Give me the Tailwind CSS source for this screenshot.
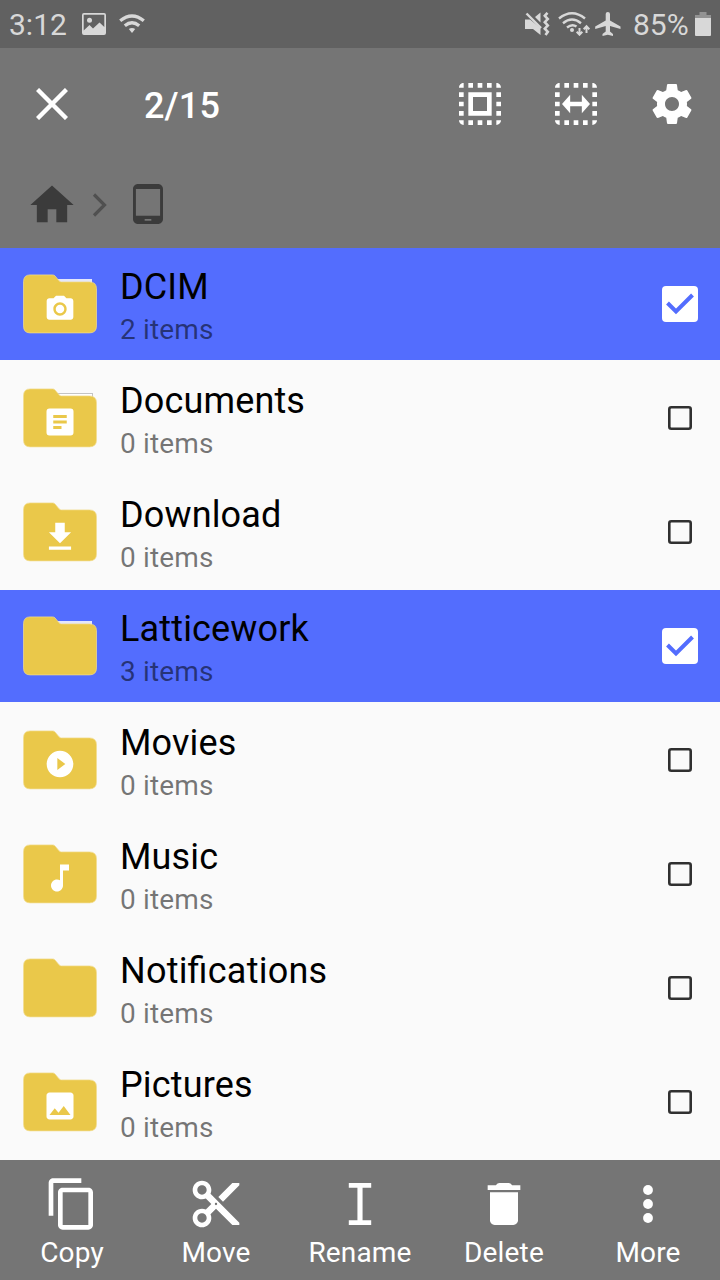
<!DOCTYPE html>
<html lang="en">
<head>
<meta charset="utf-8">
<title>Files</title>
<script src="https://cdn.jsdelivr.net/npm/@tailwindcss/browser@4"></script>
</head>
<body class="w-[720px] h-[1280px] overflow-hidden bg-[#fafafa] font-[Roboto,sans-serif] text-black tracking-[0.15px] [font-feature-settings:'liga'_1]">
<svg class="hidden">
  <symbol id="folder" viewBox="0 -.4 74 60"><path fill="#eac84a" stroke="#f2dd90" stroke-opacity=".7" d="M7 .5H29.5Q31 .5 32 1.500L36 6.300Q37 7.500 38.500 7.500H66.500Q73.500 7.500 73.500 14.500V51.500Q73.500 58.500 66.500 58.500H7Q.5 58.500 .5 51.500V7.500Q.5 .5 7 .5Z"/></symbol>
  <symbol id="checked" viewBox="0 0 36 36"><rect width="36" height="36" rx="4" fill="#fff"/><path d="M5.500 17L14 25.500L30.500 9" fill="none" stroke="#536dfe" stroke-width="4"/></symbol>
  <symbol id="unchecked" viewBox="0 0 24 24"><rect x="1.300" y="1.300" width="21.400" height="21.400" rx="2" fill="none" stroke="#303030" stroke-width="2.600"/></symbol>
  <symbol id="marquee" viewBox="0 0 24 24"><path d="M3 5h2V3c-1.100 0-2 .9-2 2zm0 8h2v-2H3v2zm4 8h2v-2H7v2zM3 9h2V7H3v2zm10-6h-2v2h2V3zm6 0v2h2c0-1.100-.9-2-2-2zM5 21v-2H3c0 1.100.9 2 2 2zm-2-4h2v-2H3v2zM9 3H7v2h2V3zm2 18h2v-2h-2v2zm8-8h2v-2h-2v2zm0 8c1.100 0 2-.9 2-2h-2v2zm0-12h2V7h-2v2zm0 8h2v-2h-2v2zm-4 4h2v-2h-2v2zm0-16h2V3h-2v2z"/></symbol>
</svg>

<div class="h-12 bg-[#616161] flex items-center text-[#d8d8d8] text-[30px] leading-none tracking-normal">
  <span class="w-[82px] pl-[9px] pt-px">3:12</span>
  <svg class="w-6 h-[22px]" viewBox="0 0 24 22" fill="currentColor"><path fill-rule="evenodd" d="M2 0H22Q24 0 24 2V20Q24 22 22 22H2Q0 22 0 20V2Q0 0 2 0ZM1.700 1.700V17.500L7.500 12L11 15.500L17.500 9.500L22.300 14V1.700Z"/><circle cx="7.500" cy="7.200" r="2.500"/></svg>
  <svg class="w-[26px] h-[19px] ml-[13px] -mt-[2px]" viewBox="0 0 26 19"><g fill="none" stroke="currentColor" stroke-width="3.300"><path d="M1.200 6.700Q13-2.800 24.800 6.700"/><path d="M5.800 11.700Q13 5.700 20.200 11.700"/></g><path fill="currentColor" d="M9.800 15Q13 12.800 16.200 15L13 19Z"/></svg>
  <div class="ml-auto flex items-center">
    <svg class="w-[25px] h-6" viewBox="0 0 25 24"><path fill="currentColor" d="M0 7.500H5L15.500 16V23L8 17H0ZM10 5L15.500 .5V10.500Z"/><path stroke="currentColor" stroke-width="2.400" d="M1.500 1.500L16 16"/><path fill="none" stroke="currentColor" stroke-width="2.600" d="M22.500 .8L19.800 3.800L22.800 7L19.800 10.200L22.800 13.500L19.800 16.700L22.800 19.800L20.500 23"/></svg>
    <svg class="w-8 h-6 ml-[8px]" viewBox="0 0 32 24"><g fill="none" stroke="currentColor" stroke-width="2.400"><path d="M1 6.500Q14-4 27 6.500"/><path d="M5 11.200Q14 4 23 11.200"/><path d="M9 15.500Q14 11.500 18.500 14.500"/><path stroke-width="2" d="M21.500 16V22.500M18.700 19.700L21.500 22.700L24.300 19.700M28.500 21V14.500M25.700 17.300L28.500 14.300L31.300 17.300"/></g><circle cx="14" cy="18" r="2" fill="currentColor"/></svg>
    <svg class="w-[26px] h-6 ml-[5px]" viewBox="0 0 26 24" fill="currentColor"><path d="M10.700 2Q10.700 0 12.800 0Q15 0 15 2V8.500L25.500 14.500V17L15 14V19.500L18 22V24L12.800 22.700L7.500 24V22L10.700 19.500V14L.2 17V14.500L10.700 8.500Z"/></svg>
    <span class="ml-[12px] w-[62px] pt-px whitespace-nowrap">85%</span>
    <svg class="w-4 h-6 mr-[9px]" viewBox="0 0 16 24"><path fill="#939393" d="M4.500 0H11.500V3H16V6H0V3H4.500Z"/><path fill="currentColor" d="M0 6H16V23Q16 24 15 24H1Q0 24 0 23Z"/></svg>
  </div>
</div>

<header class="h-[200px] bg-[#757575] flex flex-col">
  <div class="h-28 flex items-center text-white pl-9">
    <svg class="w-8 h-8" viewBox="0 0 32 32"><path stroke="currentColor" stroke-width="4.400" d="M1.500 1.500L30.500 30.500M30.500 1.500L1.500 30.500"/></svg>
    <h1 class="ml-[76px] pt-1 text-[36px] font-medium leading-none">2/15</h1>
    <div class="ml-auto flex items-center pr-6">
      <svg class="size-14" viewBox="0 0 24 24" fill="currentColor"><use href="#marquee"/><path d="M7 17h10V7H7v10zm2-8h6v6H9V9z"/></svg>
      <svg class="size-14 ml-10" viewBox="0 0 24 24" fill="currentColor"><use href="#marquee"/><path d="M6 12L9.500 8V11H14.500V8L18 12L14.500 16V13H9.500V16Z"/></svg>
      <svg class="size-12 ml-11" viewBox="0 0 24 24" fill="currentColor"><path d="M19.430 12.980c.04-.32.070-.64.070-.98s-.03-.66-.07-.98l2.110-1.650c.19-.15.240-.42.120-.64l-2-3.460c-.12-.22-.39-.3-.61-.22l-2.490 1c-.52-.4-1.080-.73-1.690-.98l-.38-2.650C14.460 2.180 14.250 2 14 2h-4c-.25 0-.46.180-.49.420l-.38 2.650c-.61.250-1.170.59-1.690.98l-2.490-1c-.23-.09-.49 0-.61.220l-2 3.460c-.13.220-.07.490.120.640l2.110 1.650c-.04.320-.07.650-.07.980s.03.660.070.980l-2.110 1.650c-.19.150-.24.420-.12.640l2 3.460c.12.220.39.300.61.220l2.490-1c.52.400 1.080.73 1.690.98l.38 2.650c.03.240.24.420.49.420h4c.25 0 .46-.18.490-.42l.38-2.650c.61-.25 1.170-.59 1.690-.98l2.490 1c.23.090.49 0 .61-.22l2-3.460c.12-.22.070-.49-.12-.64l-2.110-1.650zM12 15.500c-1.930 0-3.500-1.570-3.500-3.500s1.570-3.500 3.500-3.500 3.500 1.570 3.500 3.500-1.570 3.500-3.500 3.500z"/></svg>
    </div>
  </div>
  <nav class="h-[88px] flex items-center pl-[26px] text-[#3b3b3b]">
    <svg class="size-[52px] mt-[2px]" viewBox="0 0 24 24" fill="currentColor"><path d="M10 20v-6h4v6h5v-8h3L12 3 2 12h3v8z"/></svg>
    <svg class="w-[15px] h-6 ml-[14px] mt-[2px]" viewBox="0 0 15 24"><path fill="none" stroke="#505050" stroke-width="3.200" d="M2 1.500L12.500 12L2 22.500"/></svg>
    <svg class="size-10 ml-[21px]" viewBox="0 0 24 24" fill="currentColor"><path d="M18 0H6C4.340 0 3 1.340 3 3v18c0 1.660 1.340 3 3 3h12c1.660 0 3-1.340 3-3V3c0-1.660-1.340-3-3-3zm-4 22h-4v-1h4v1zm5.250-3H4.750V3h14.500v16z"/></svg>
  </nav>
</header>

<main class="h-[912px] flex flex-col gap-[2px]">
  <section class="h-28 flex bg-[#536dfe]">
    <div class="relative w-[120px] pl-[23px] pt-[26px]">
      <div class="absolute left-[56px] top-[31px] w-9 h-2 bg-[#e4e7fb]"></div>
      <svg class="relative w-[74px] h-[60px]"><use href="#folder"/></svg>
      <svg class="absolute left-11 top-[45px] size-8" viewBox="0 0 24 24" fill="#fff"><path fill-rule="evenodd" d="M9 2L7.170 4H4c-1.100 0-2 .9-2 2v12c0 1.100.9 2 2 2h16c1.100 0 2-.9 2-2V6c0-1.100-.9-2-2-2h-3.170L15 2H9zm3 15c-2.760 0-5-2.240-5-5s2.240-5 5-5 5 2.240 5 5-2.240 5-5 5z"/><circle cx="12" cy="12" r="3.200"/></svg>
    </div>
    <div class="pt-[18px]"><div class="text-[36px] leading-[42px]">DCIM</div><div class="mt-[5px] text-[28px] leading-[33px] text-black/54">2 items</div></div>
    <svg class="ml-auto mr-[22px] mt-[38px] size-9"><use href="#checked"/></svg>
  </section>
  <section class="h-28 flex">
    <div class="relative w-[120px] pl-[23px] pt-[26px]">
      <div class="absolute left-[56px] top-[31px] w-[37px] h-3 border border-[#c4c4c4] bg-white"></div>
      <svg class="relative w-[74px] h-[60px]"><use href="#folder"/></svg>
      <svg class="absolute left-[42px] top-[42px] size-9" viewBox="0 0 24 24" fill="#fff"><path fill-rule="evenodd" d="M5 3H19Q21 3 21 5V19Q21 21 19 21H5Q3 21 3 19V5Q3 3 5 3ZM7.500 7.300V9.300H16.500V7.300ZM7.500 11V13H16.500V11ZM7.500 14.700V16.700H13V14.700Z"/></svg>
    </div>
    <div class="pt-[18px]"><div class="text-[36px] leading-[42px]">Documents</div><div class="mt-[5px] text-[28px] leading-[33px] text-black/54">0 items</div></div>
    <svg class="ml-auto mr-7 mt-11 size-6"><use href="#unchecked"/></svg>
  </section>
  <section class="h-28 flex">
    <div class="relative w-[120px] pl-[23px] pt-[26px]">
      <svg class="w-[74px] h-[60px]"><use href="#folder"/></svg>
      <svg class="absolute left-[41px] top-[42px] size-[38px]" viewBox="0 0 24 24" fill="#fff"><path d="M19 9h-4V3H9v6H5l7 7 7-7zM5 18v2h14v-2H5z"/></svg>
    </div>
    <div class="pt-[18px]"><div class="text-[36px] leading-[42px]">Download</div><div class="mt-[5px] text-[28px] leading-[33px] text-black/54">0 items</div></div>
    <svg class="ml-auto mr-7 mt-11 size-6"><use href="#unchecked"/></svg>
  </section>
  <section class="h-28 flex bg-[#536dfe]">
    <div class="relative w-[120px] pl-[23px] pt-[26px]">
      <div class="absolute left-[56px] top-[31px] w-9 h-2 bg-[#e4e7fb]"></div>
      <svg class="relative w-[74px] h-[60px]"><use href="#folder"/></svg>
    </div>
    <div class="pt-[18px]"><div class="text-[36px] leading-[42px]">Latticework</div><div class="mt-[5px] text-[28px] leading-[33px] text-black/54">3 items</div></div>
    <svg class="ml-auto mr-[22px] mt-[38px] size-9"><use href="#checked"/></svg>
  </section>
  <section class="h-28 flex">
    <div class="relative w-[120px] pl-[23px] pt-[26px]">
      <svg class="w-[74px] h-[60px]"><use href="#folder"/></svg>
      <svg class="absolute left-11 top-11 size-8" viewBox="0 0 24 24" fill="#fff"><path d="M12 2C6.480 2 2 6.480 2 12s4.480 10 10 10 10-4.480 10-10S17.520 2 12 2zm-2 14.500v-9l6 4.500-6 4.500z"/></svg>
    </div>
    <div class="pt-[18px]"><div class="text-[36px] leading-[42px]">Movies</div><div class="mt-[5px] text-[28px] leading-[33px] text-black/54">0 items</div></div>
    <svg class="ml-auto mr-7 mt-11 size-6"><use href="#unchecked"/></svg>
  </section>
  <section class="h-28 flex">
    <div class="relative w-[120px] pl-[23px] pt-[26px]">
      <svg class="w-[74px] h-[60px]"><use href="#folder"/></svg>
      <svg class="absolute left-[42px] top-[42px] size-9" viewBox="0 0 24 24" fill="#fff"><path d="M12 3v10.550c-.59-.34-1.270-.55-2-.55-2.210 0-4 1.790-4 4s1.790 4 4 4 4-1.790 4-4V7h4V3h-6z"/></svg>
    </div>
    <div class="pt-[18px]"><div class="text-[36px] leading-[42px]">Music</div><div class="mt-[5px] text-[28px] leading-[33px] text-black/54">0 items</div></div>
    <svg class="ml-auto mr-7 mt-11 size-6"><use href="#unchecked"/></svg>
  </section>
  <section class="h-28 flex">
    <div class="relative w-[120px] pl-[23px] pt-[26px]">
      <svg class="w-[74px] h-[60px]"><use href="#folder"/></svg>
    </div>
    <div class="pt-[18px]"><div class="text-[36px] leading-[42px] tracking-[0.22px]">Notifications</div><div class="mt-[5px] text-[28px] leading-[33px] text-black/54">0 items</div></div>
    <svg class="ml-auto mr-7 mt-11 size-6"><use href="#unchecked"/></svg>
  </section>
  <section class="h-28 flex">
    <div class="relative w-[120px] pl-[23px] pt-[26px]">
      <svg class="w-[74px] h-[60px]"><use href="#folder"/></svg>
      <svg class="absolute left-[42px] top-[42px] size-9" viewBox="0 0 24 24" fill="#fff"><path d="M21 19V5c0-1.100-.9-2-2-2H5c-1.100 0-2 .9-2 2v14c0 1.100.9 2 2 2h14c1.100 0 2-.9 2-2zM8.500 13.500l2.500 3.010L14.500 12l4.500 6H5l3.500-4.500z"/></svg>
    </div>
    <div class="pt-[18px]"><div class="text-[36px] leading-[42px]">Pictures</div><div class="mt-[5px] text-[28px] leading-[33px] text-black/54">0 items</div></div>
    <svg class="ml-auto mr-7 mt-11 size-6"><use href="#unchecked"/></svg>
  </section>
</main>

<footer class="h-[120px] bg-[#757575] text-white text-[28px] leading-[33px] grid grid-cols-5 justify-items-center">
  <div class="flex flex-col items-center pt-4">
    <svg class="size-14" viewBox="0 0 24 24" fill="currentColor"><path d="M16 1H4c-1.100 0-2 .9-2 2v14h2V3h12V1zm3 4H8c-1.100 0-2 .9-2 2v14c0 1.100.9 2 2 2h11c1.100 0 2-.9 2-2V7c0-1.100-.9-2-2-2zm0 16H8V7h11v14z"/></svg>
    <span class="mt-1">Copy</span>
  </div>
  <div class="flex flex-col items-center pt-4">
    <svg class="size-14" viewBox="0 0 24 24" fill="currentColor"><path d="M9.640 7.640c.23-.5.360-1.050.360-1.640 0-2.210-1.790-4-4-4S2 3.790 2 6s1.790 4 4 4c.59 0 1.140-.13 1.640-.36L10 12l-2.360 2.360C7.140 14.130 6.590 14 6 14c-2.210 0-4 1.790-4 4s1.790 4 4 4 4-1.790 4-4c0-.59-.13-1.140-.36-1.640L12 14l7 7h3v-1L9.640 7.640zM6 8c-1.100 0-2-.89-2-2s.9-2 2-2 2 .89 2 2-.9 2-2 2zm0 12c-1.100 0-2-.89-2-2s.9-2 2-2 2 .89 2 2-.9 2-2 2zm6-7.500c-.28 0-.5-.22-.5-.5s.22-.5.5-.5.500.22.500.5-.22.500-.5.500zM19 3l-6 6 2 2 7-7V3z"/></svg>
    <span class="mt-1">Move</span>
  </div>
  <div class="flex flex-col items-center pt-4">
    <svg class="size-14" viewBox="0 0 24 24" fill="currentColor"><path d="M7.200 3H16.800V5H13.100V19H16.800V21H7.200V19H10.900V5H7.200Z"/></svg>
    <span class="mt-1">Rename</span>
  </div>
  <div class="flex flex-col items-center pt-4">
    <svg class="size-14" viewBox="0 0 24 24" fill="currentColor"><path d="M6 19c0 1.100.9 2 2 2h8c1.100 0 2-.9 2-2V7H6v12zM19 4h-3.500q-.7-1-1.500-1h-4q-.8 0-1.500 1H5v2h14V4z"/></svg>
    <span class="mt-1">Delete</span>
  </div>
  <div class="flex flex-col items-center pt-4">
    <svg class="size-14" viewBox="0 0 24 24" fill="currentColor"><circle cx="12" cy="6" r="2.100"/><circle cx="12" cy="12" r="2.100"/><circle cx="12" cy="18" r="2.100"/></svg>
    <span class="mt-1">More</span>
  </div>
</footer>
</body>
</html>
